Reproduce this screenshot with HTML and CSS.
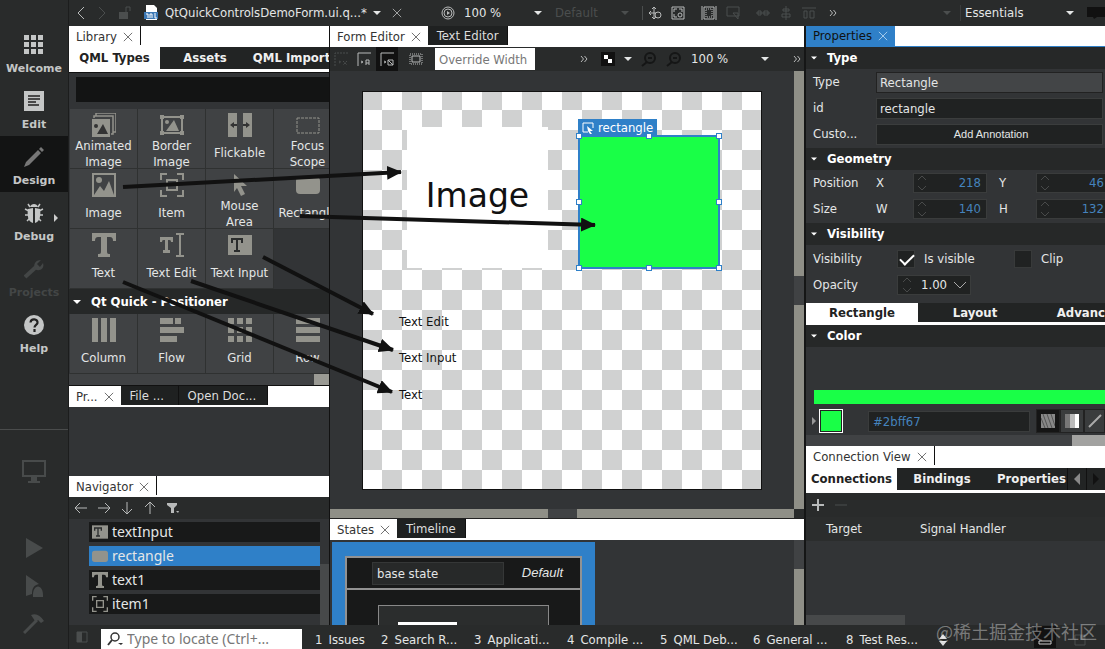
FILE: index.html
```html
<!DOCTYPE html>
<html lang="en">
<head>
<meta charset="UTF-8" />
<meta name="viewport" content="width=device-width, initial-scale=1" />
<title>QtQuickControlsDemoForm.ui.qml - Qt Creator</title>
<link rel="stylesheet" href="styles.css">
</head>
<body>
<!-- shared icons -->
<svg class="defs" aria-hidden="true">
  <symbol id="close" viewBox="0 0 12 12"><path d="M1 1l10 10M11 1L1 11" fill="none" stroke="currentColor"/></symbol>
  <symbol id="down" viewBox="0 0 8 4"><path d="M0 0h8L4 4z" fill="currentColor"/></symbol>
  <symbol id="more" viewBox="0 0 8 8"><path d="M1 1l2.500 3L1 7M4.500 1L7 4 4.500 7" fill="none" stroke="currentColor"/></symbol>
  <symbol id="spin" viewBox="0 0 10 18"><path d="M1 6l4-4 4 4M1 12l4 4 4-4" fill="none" stroke="currentColor"/></symbol>
  <symbol id="zoomer" viewBox="0 0 16 16"><circle cx="9" cy="7" r="5" fill="none" stroke="currentColor" stroke-width="2"/><path d="M6 11l-5 4M7 7h4" stroke="currentColor" stroke-width="2"/></symbol>
  <symbol id="item" viewBox="0 0 24 24"><path d="M1 7V1h6M17 1h6v6M23 17v6h-6M7 23H1v-6" fill="none" stroke="currentColor" stroke-width="2"/><path d="M7 7h10v10H7z" fill="none" stroke="currentColor" stroke-width="2"/></symbol>
  <symbol id="text" viewBox="0 0 24 24"><path d="M0 0h24v8h-3c0-3-1-4-3-4h-3v14c0 3 1 3 3 3v3H6v-3c2 0 3 0 3-3V4H6C4 4 3 5 3 8H0z" fill="currentColor"/></symbol>
  <symbol id="textinput" viewBox="0 0 24 24"><path d="M0 2h24v20H0z" fill="currentColor"/><path d="M3 5h12v5h-2V7h-3v10h2v2H6v-2h2V7H5v3H3z" fill="#2b2d2d"/></symbol>
  <symbol id="rect" viewBox="0 0 24 24"><rect y="4" width="24" height="17" rx="4" fill="currentColor"/></symbol>
</svg>

<div class="app">
  <nav class="modes" aria-label="Modes">
    <button class="mode"><svg width="20" height="20" viewBox="0 0 20 20"><path fill="currentColor" d="M0 0h5v5H0zM7 0h5v5H7zM14 0h5v5h-5zM0 7h5v5H0zM7 7h5v5H7zM14 7h5v5h-5zM0 14h5v5H0zM7 14h5v5H7zM14 14h5v5h-5z"/></svg>Welcome</button>
    <button class="mode"><svg width="20" height="20" viewBox="0 0 20 20"><path fill="currentColor" d="M0 0h20v20H0z"/><path d="M4 5h12M4 8h12M4 11h8M4 14h11" stroke="#222" stroke-width="1.500"/></svg>Edit</button>
    <button class="mode active"><svg width="20" height="20" viewBox="0 0 20 20"><path fill="#777" d="M0 20l2-5L14 3l3 3L5 18zM15 2l2-2 3 3-2 2z"/></svg>Design</button>
    <button class="mode"><svg width="20" height="20" viewBox="0 0 20 20"><path d="M6 4l-2-3M14 4l2-3M5 8L1 6M5 12H1M6 15l-3 3M15 8l4-2M15 12h4M14 15l3 3" stroke="currentColor" stroke-width="1.500"/><path fill="currentColor" d="M6 4c1-4 7-4 8 0zM9 5v15C4 19 3 12 4 6zM11 5v15c5-1 6-8 5-14z"/></svg>Debug<span class="mode-menu"></span></button>
    <button class="mode disabled" disabled><svg width="20" height="20" viewBox="0 0 20 20"><path d="M1 18L12 8" stroke="currentColor" stroke-width="4"/><path d="M17 1l-4 4 3 3 3-4c2 6-4 9-8 6-2-4 0-9 6-9z" fill="currentColor"/></svg>Projects</button>
    <button class="mode"><svg width="20" height="20" viewBox="0 0 20 20"><circle cx="10" cy="10" r="10" fill="currentColor"/><path d="M6.500 7.500C7 3 14 3.500 13.500 8c-.5 2-3 2-3 4.500M10.500 14v3" fill="none" stroke="#222" stroke-width="2.200"/></svg>Help</button>
    <div class="kits">
      <svg class="kit" width="24" height="24" viewBox="0 0 24 24"><path d="M1 1h22v15H1z" fill="none" stroke="currentColor" stroke-width="2"/><path d="M9 17h6v4h3v2H6v-2h3z" fill="currentColor"/></svg>
      <svg width="20" height="20" viewBox="0 0 20 20"><path d="M2 0l17 10L2 20z" fill="currentColor"/></svg>
      <svg width="20" height="22" viewBox="0 0 20 22"><path d="M2 0l13 9c-5 1-7 4-7 10l-6 2zM9 22c-1-14 11-14 10 0z" fill="currentColor"/></svg>
      <svg width="22" height="20" viewBox="0 0 22 20"><path d="M1 19L14 6" stroke="currentColor" stroke-width="3"/><path d="M8 1c5-2 9 0 13 6l-3 2-3-3-3 1z" fill="currentColor"/></svg>
    </div>
  </nav>

  <div class="main">
    <header class="topbar">
      <button class="icon-btn" aria-label="Back"><svg width="8" height="14" viewBox="0 0 8 14"><path d="M7 1L1 7l6 6" fill="none" stroke="currentColor"/></svg></button>
      <button class="icon-btn dim" aria-label="Forward"><svg width="8" height="14" viewBox="0 0 8 14"><path d="M1 1l6 6-6 6" fill="none" stroke="currentColor"/></svg></button>
      <svg class="dim" width="12" height="14" viewBox="0 0 12 14"><path d="M0 6h9v7H0z" fill="currentColor"/><path d="M7 6V1h4v4" fill="none" stroke="currentColor"/></svg>
      <svg width="14" height="16" viewBox="0 0 14 16"><path d="M2 0h8l3 3v12H2z" fill="#fff"/><path d="M0 7h14v7H0z" fill="#3c78b4"/><path d="M2 9h2v4M6 13V9h2v4M11 8v5h2" fill="none" stroke="#fff"/></svg>
      <span class="pick file"><select aria-label="Open document"><option>QtQuickControlsDemoForm.ui.q...*</option></select><svg width="8" height="4"><use href="#down"/></svg></span>
      <button class="icon-btn split" aria-label="Close document"><svg width="10" height="10"><use href="#close"/></svg></button>
      <button class="icon-btn live" aria-label="Live preview"><svg width="14" height="14" viewBox="0 0 14 14"><circle cx="7" cy="7" r="6" fill="none" stroke="currentColor"/><circle cx="7" cy="7" r="4" fill="none" stroke="currentColor"/><path d="M6 5l3 2-3 2z" fill="currentColor"/></svg></button>
      <span class="pick preview"><select aria-label="Preview zoom"><option>100 %</option></select><svg width="8" height="4"><use href="#down"/></svg></span>
      <span class="pick style dim"><select aria-label="Style" disabled><option>Default</option></select><svg width="8" height="4"><use href="#down"/></svg></span>
      <div class="tools">
        <svg width="14" height="14" viewBox="0 0 14 14"><path d="M6 1v12M1 7h9M4 3l2-2 2 2M3 5L1 7l2 2M4 11l2 2 2-2" fill="none" stroke="currentColor"/><circle cx="10" cy="9" r="3" fill="#2b2d2d" stroke="currentColor"/></svg>
        <svg width="14" height="14" viewBox="0 0 14 14"><path d="M1 1h12v12H1zM3 6V3h3M8 3h3v3M3 8v3h3" fill="none" stroke="currentColor"/><circle cx="9" cy="9" r="2" fill="none" stroke="currentColor"/></svg>
        <svg class="gap" width="16" height="14" viewBox="0 0 16 14"><path d="M1 0v14M15 0v14" stroke="currentColor"/><path d="M3 1h10v12H3z" fill="none" stroke="currentColor"/><path d="M5 3h6v8H5z" fill="none" stroke="currentColor" stroke-dasharray="1 1"/></svg>
        <svg class="dim" width="14" height="14" viewBox="0 0 14 14"><path d="M1 1h12v9H1zM7 7h5v6z" fill="none" stroke="currentColor"/></svg>
        <svg class="dim gap" width="14" height="14" viewBox="0 0 14 14"><path d="M0 7h14M2 5h3v4H2zM8 5h4v4H8z" fill="none" stroke="currentColor"/></svg>
        <svg class="dim" width="14" height="14" viewBox="0 0 14 14"><path d="M7 0v14M4 3h6v2H4zM3 8h8v3H3z" fill="none" stroke="currentColor"/></svg>
        <svg class="dim" width="14" height="14" viewBox="0 0 14 14"><path d="M0 2h14M2 5h3v7H2zM8 5h4v7H8z" fill="none" stroke="currentColor"/></svg>
      </div>
      <button class="icon-btn overflow" aria-label="More tools"><svg width="8" height="8"><use href="#more"/></svg></button>
      <svg class="dim" width="8" height="4"><use href="#down"/></svg>
      <span class="pick workspace"><select aria-label="Workspace"><option>Essentials</option></select><svg width="8" height="4"><use href="#down"/></svg></span>
      <svg width="18" height="14" viewBox="0 0 18 14"><path d="M0 1h18v10h-8l-3 2-1-2H0z" fill="#111"/></svg>
    </header>

    <div class="workspace-area">
      <aside class="left">
        <div class="dock-tabs"><button class="tab on">Library <svg width="10" height="10"><use href="#close"/></svg></button><span class="tab-end"></span></div>
        <div class="sub-tabs library-tabs"><button class="on">QML Types</button><button>Assets</button><button>QML Imports</button></div>
        <div class="search"><input type="text" aria-label="Search library"></div>
        <div class="types">
          <button><svg width="24" height="24" viewBox="0 0 24 24"><path d="M4 3V0h20v19h-3M2 5V3h19v18h-2" fill="none" stroke="currentColor" stroke-width="1.500"/><path d="M0 6h18v18H0z" fill="currentColor"/><circle cx="4" cy="13" r="2" fill="#333"/><path d="M5 21l6-10 5 10z" fill="#333"/></svg><span>Animated<br>Image</span></button>
          <button><svg width="24" height="24" viewBox="0 0 24 24"><path d="M2 4h20v16H2z" fill="none" stroke="currentColor" stroke-width="2"/><path d="M0 2h4v4H0zM20 2h4v4h-4zM0 18h4v4H0zM20 18h4v4h-4z" fill="currentColor"/><circle cx="7" cy="9" r="2" fill="currentColor"/><path d="M6 18l8-11 5 11z" fill="currentColor"/></svg><span>Border<br>Image</span></button>
          <button><svg width="24" height="24" viewBox="0 0 24 24"><path d="M0 0h9v24H0zM15 0h9v24h-9z" fill="currentColor"/><path d="M2 12l4-3v2h3v2H6v2zM22 12l-4-3v2h-3v2h3v2z" fill="#333"/></svg><span>Flickable</span></button>
          <button><svg width="24" height="24" viewBox="0 0 24 24"><path d="M1 5h22v15H1z" fill="none" stroke="currentColor" stroke-dasharray="3 1"/></svg><span>Focus<br>Scope</span></button>
          <button><svg width="24" height="24" viewBox="0 0 24 24"><path d="M1 1h22v22H1z" fill="none" stroke="currentColor" stroke-width="2"/><circle cx="7" cy="7" r="3" fill="currentColor"/><path d="M2 22l6-9 4 5 5-10 5 14z" fill="currentColor"/></svg><span>Image</span></button>
          <button><svg width="24" height="24"><use href="#item"/></svg><span>Item</span></button>
          <button><svg width="24" height="24" viewBox="0 0 24 24"><path d="M6 1l13 12h-6l4 8-4 2-4-8-3 4z" fill="currentColor"/></svg><span>Mouse<br>Area</span></button>
          <button><svg width="24" height="24"><use href="#rect"/></svg><span>Rectangle</span></button>
          <button><svg width="24" height="24"><use href="#text"/></svg><span>Text</span></button>
          <button><svg width="24" height="24" viewBox="0 0 24 24"><path d="M0 4h13v5h-2c0-2-1-2-3-2v10h2v3H3v-3h2V7C3 7 2 7 2 9H0z" fill="currentColor"/><path d="M16 1h8M20 1v22M16 23h8" stroke="currentColor" stroke-width="2"/></svg><span>Text Edit</span></button>
          <button><svg width="24" height="24"><use href="#textinput"/></svg><span>Text Input</span></button>
        </div>
        <h3 class="group"><svg width="8" height="4"><use href="#down"/></svg>Qt Quick - Positioner</h3>
        <div class="types">
          <button><svg width="24" height="24" viewBox="0 0 24 24"><path d="M0 0h6v24H0zM9 0h6v24H9zM18 0h6v24h-6z" fill="currentColor"/></svg><span>Column</span></button>
          <button><svg width="24" height="24" viewBox="0 0 24 24"><path d="M0 0h13v6H0zM15 0h6v6h-6zM0 9h24v6H0zM0 18h17v6H0z" fill="currentColor"/></svg><span>Flow</span></button>
          <button><svg width="24" height="24" viewBox="0 0 24 24"><path d="M0 0h6v6H0zM9 0h6v6H9zM18 0h6v6h-6zM0 9h6v6H0zM9 9h6v6H9zM18 9h6v6h-6zM0 18h6v6H0zM9 18h6v6H9zM18 18h6v6h-6z" fill="currentColor"/></svg><span>Grid</span></button>
          <button><svg width="24" height="24" viewBox="0 0 24 24"><path d="M0 0h24v6H0zM0 9h24v6H0zM0 18h24v6H0z" fill="currentColor"/></svg><span>Row</span></button>
        </div>
        <div class="library-foot"><span></span></div>
        <div class="dock-tabs"><button class="tab on">Pr... <svg width="10" height="10"><use href="#close"/></svg></button><button class="tab off">File ...</button><button class="tab off wide">Open Doc...</button></div>
        <div class="empty-dock"></div>
        <div class="dock-tabs"><button class="tab on">Navigator <svg width="10" height="10"><use href="#close"/></svg></button><span class="tab-end"></span></div>
        <div class="nav-tools">
          <button class="icon-btn" aria-label="Left"><svg width="12" height="12" viewBox="0 0 12 12"><path d="M12 6H1M5 1L0 6l5 5" fill="none" stroke="currentColor"/></svg></button>
          <button class="icon-btn" aria-label="Right"><svg width="12" height="12" viewBox="0 0 12 12"><path d="M0 6h11M7 1l5 5-5 5" fill="none" stroke="currentColor"/></svg></button>
          <button class="icon-btn" aria-label="Down"><svg width="12" height="12" viewBox="0 0 12 12"><path d="M6 0v11M1 7l5 5 5-5" fill="none" stroke="currentColor"/></svg></button>
          <button class="icon-btn" aria-label="Up"><svg width="12" height="12" viewBox="0 0 12 12"><path d="M6 12V1M1 5l5-5 5 5" fill="none" stroke="currentColor"/></svg></button>
          <button class="icon-btn" aria-label="Filter"><svg width="12" height="12" viewBox="0 0 12 12"><path d="M0 1h10v2L7 6v5H4V6L0 3zM9 9h3l-1 2z" fill="currentColor"/></svg></button>
        </div>
        <div class="tree">
          <ul>
            <li><svg width="16" height="16"><use href="#textinput"/></svg>textInput</li>
            <li class="selected"><svg width="16" height="16"><use href="#rect"/></svg>rectangle</li>
            <li><svg width="16" height="16"><use href="#text"/></svg>text1</li>
            <li><svg width="16" height="16"><use href="#item"/></svg>item1</li>
          </ul>
          <div class="tree-scroll"></div>
        </div>
      </aside>

      <main class="center">
        <div class="dock-tabs"><button class="tab on">Form Editor <svg width="10" height="10"><use href="#close"/></svg></button><button class="tab off">Text Editor</button></div>
        <div class="form-tools">
          <button class="icon-btn dim" aria-label="No snapping"><svg width="14" height="14" viewBox="0 0 14 14"><path d="M1 14V1h13M5 9l2 1-2 1M9 9l4 4M13 9l-4 4" fill="none" stroke="currentColor" stroke-dasharray="2 1"/></svg></button>
          <button class="icon-btn" aria-label="Snap to anchors"><svg width="14" height="14" viewBox="0 0 14 14"><path d="M1 14V1h13M4 9l2 1-2 1M9 13V8h3v5M9 11h3" fill="none" stroke="currentColor"/></svg></button>
          <button class="icon-btn pressed" aria-label="Snap to parent"><svg width="14" height="14" viewBox="0 0 14 14"><path d="M1 14V1h13M4 9l2 1-2 1M8 8h5v5H8zM8 8l5 5" fill="none" stroke="currentColor"/></svg></button>
          <button class="icon-btn bounds" aria-label="Show bounding rectangles"><svg width="14" height="12" viewBox="0 0 14 12"><path d="M1 1h12v10H1z" fill="none" stroke="currentColor" stroke-dasharray="1 1"/><path d="M3 3h8v6H3z" fill="none" stroke="currentColor"/></svg></button>
          <input class="override" type="text" placeholder="Override Width" aria-label="Override Width">
          <button class="icon-btn push" aria-label="More size options"><svg width="8" height="8"><use href="#more"/></svg></button>
          <button class="icon-btn canvas-color" aria-label="Canvas colour"><svg width="14" height="14" viewBox="0 0 14 14"><path d="M0 0h14v14H0z" fill="#111"/><path d="M3 3h4v4H3zM7 7h4v4H7z" fill="#fff"/></svg></button>
          <svg width="8" height="4"><use href="#down"/></svg>
          <button class="icon-btn dark" aria-label="Zoom in"><svg width="16" height="16"><use href="#zoomer"/></svg></button>
          <button class="icon-btn dark" aria-label="Zoom out"><svg width="16" height="16"><use href="#zoomer"/></svg></button>
          <span class="pick canvas-zoom"><select aria-label="Canvas zoom"><option>100 %</option></select><svg width="8" height="4"><use href="#down"/></svg></span>
          <button class="icon-btn last" aria-label="More"><svg width="8" height="8"><use href="#more"/></svg></button>
        </div>
        <div class="form-view">
          <div class="form-canvas">
            <div class="artboard">
              <div class="node image-node">Image</div>
              <div class="node rect-node">
                <span class="node-label"><svg width="12" height="12" viewBox="0 0 12 12"><path d="M11 6V1H1v9h5" fill="none" stroke="#fff"/><path d="M5 4l6 5H8l2 3H8L6 9z" fill="#fff"/></svg>rectangle</span>
                <i class="h nw"></i><i class="h n"></i><i class="h ne"></i><i class="h w"></i><i class="h e"></i><i class="h sw"></i><i class="h s"></i><i class="h se"></i>
              </div>
              <span class="node edit-node">Text Edit</span>
              <span class="node input-node">Text Input</span>
              <span class="node text-node">Text</span>
            </div>
          </div>
          <div class="vscroll"><span></span><b></b><span></span></div>
        </div>
        <div class="hscroll"><span></span><b></b><span></span></div>
        <div class="dock-tabs"><button class="tab on">States <svg width="10" height="10"><use href="#close"/></svg></button><button class="tab off">Timeline</button></div>
        <div class="states">
          <div class="state">
            <div class="state-card">
              <div class="state-head"><input type="text" value="base state" aria-label="State name"><em>Default</em></div>
              <div class="state-body"><div class="thumb"><span></span></div></div>
            </div>
          </div>
          <div class="vscroll"><b></b><span></span></div>
        </div>
      </main>

      <aside class="right">
        <div class="dock-tabs focus"><button class="tab active">Properties <svg width="10" height="10"><use href="#close"/></svg></button></div>
        <h3 class="section"><svg width="6" height="4"><use href="#down"/></svg>Type</h3>
        <div class="rows">
          <div class="row"><label for="ptype">Type</label><input id="ptype" class="field raised" type="text" value="Rectangle" readonly></div>
          <div class="row"><label for="pid">id</label><input id="pid" class="field" type="text" value="rectangle"></div>
          <div class="row"><span class="label">Custo...</span><button class="field annotate">Add Annotation</button></div>
        </div>
        <h3 class="section"><svg width="6" height="4"><use href="#down"/></svg>Geometry</h3>
        <div class="rows">
          <div class="row"><span class="label">Position</span><label class="axis" for="gx">X</label><span class="spin"><svg width="10" height="18"><use href="#spin"/></svg><input id="gx" type="text" value="218"></span><label class="axis" for="gy">Y</label><span class="spin"><svg width="10" height="18"><use href="#spin"/></svg><input id="gy" type="text" value="46"></span></div>
          <div class="row"><span class="label">Size</span><label class="axis" for="gw">W</label><span class="spin"><svg width="10" height="18"><use href="#spin"/></svg><input id="gw" type="text" value="140"></span><label class="axis" for="gh">H</label><span class="spin"><svg width="10" height="18"><use href="#spin"/></svg><input id="gh" type="text" value="132"></span></div>
        </div>
        <h3 class="section"><svg width="6" height="4"><use href="#down"/></svg>Visibility</h3>
        <div class="rows tall">
          <div class="row"><span class="label vis">Visibility</span><label class="check"><input type="checkbox" checked>Is visible</label><label class="check"><input type="checkbox">Clip</label></div>
          <div class="row"><label class="vis" for="op">Opacity</label><span class="opacity"><svg width="10" height="18"><use href="#spin"/></svg><input id="op" type="text" value="1.00"><svg class="chev" width="12" height="8" viewBox="0 0 12 8"><path d="M0 1l6 6 6-6" fill="none" stroke="currentColor"/></svg></span></div>
        </div>
        <div class="sub-tabs prop-tabs"><button class="on">Rectangle</button><button>Layout</button><button>Advanced</button></div>
        <h3 class="section"><svg width="6" height="4"><use href="#down"/></svg>Color</h3>
        <div class="color-bar"></div>
        <div class="color-row">
          <span class="expand"></span><span class="swatch"></span>
          <input type="text" value="#2bff67" aria-label="Color value">
          <button class="fill on" aria-label="Solid"><svg width="14" height="14" viewBox="0 0 14 14"><path d="M0 0h14v14H0z" fill="#888"/><path d="M2 0l5 14M6 0l5 14M10 0l4 12M0 4l4 10" stroke="#555"/></svg></button>
          <button class="fill" aria-label="Gradient"><svg width="14" height="14" viewBox="0 0 14 14"><path d="M0 0h5v14H0z" fill="#777"/><path d="M5 0h5v14H5z" fill="#bbb"/><path d="M10 0h4v14h-4z" fill="#fff"/></svg></button>
          <button class="fill" aria-label="Transparent"><svg width="14" height="14" viewBox="0 0 14 14"><path d="M1 13L13 1" stroke="#aaa" stroke-width="2"/></svg></button>
        </div>
        <div class="prop-scroll"><span></span></div>
        <div class="dock-tabs"><button class="tab on">Connection View <svg width="10" height="10"><use href="#close"/></svg></button><span class="tab-end"></span></div>
        <div class="sub-tabs conn-tabs"><button class="on">Connections</button><button>Bindings</button><button>Properties</button><button class="arrow" aria-label="Previous tab"><svg width="6" height="12" viewBox="0 0 6 12"><path d="M6 0v12L0 6z" fill="#888"/></svg></button><button class="arrow" aria-label="Next tab"><svg width="6" height="12" viewBox="0 0 6 12"><path d="M0 0v12l6-6z" fill="#111"/></svg></button></div>
        <div class="conn-tools">
          <button class="icon-btn" aria-label="Add"><svg width="12" height="12" viewBox="0 0 12 12"><path d="M6 0v12M0 6h12" stroke="currentColor" stroke-width="2"/></svg></button>
          <button class="icon-btn dim" aria-label="Remove"><svg width="12" height="12" viewBox="0 0 12 12"><path d="M0 6h12" stroke="currentColor"/></svg></button>
        </div>
        <table class="conn"><thead><tr><th>Target</th><th>Signal Handler</th><th></th></tr></thead></table>
        <div class="conn-body"><div class="conn-scroll"></div></div>
      </aside>
    </div>

    <footer class="bottombar">
      <svg class="dim" width="12" height="12" viewBox="0 0 12 12"><path d="M1 1h10v10H1z" fill="none" stroke="currentColor"/><path d="M1 1h5v10H1z" fill="currentColor"/></svg>
      <label class="locator"><svg width="16" height="14" viewBox="0 0 16 14"><circle cx="8" cy="5" r="4" fill="none" stroke="#333" stroke-width="1.500"/><path d="M5 8l-4 5" stroke="#333" stroke-width="2"/><path d="M11 11h5l-2 2z" fill="#333"/></svg><input type="text" placeholder="Type to locate (Ctrl+..." aria-label="Locate"></label>
      <div class="panes">
        <button class="short"><b>1</b>Issues</button><button><b>2</b>Search R...</button><button><b>3</b>Applicati...</button><button><b>4</b>Compile ...</button><button><b>5</b>QML Deb...</button><button><b>6</b>General ...</button><button><b>8</b>Test Res...</button>
      </div>
      <svg class="pane-more" width="8" height="12" viewBox="0 0 8 12"><path d="M0 5l4-5 4 5zM0 7h8l-4 5z" fill="#ddd"/></svg>
      <button class="progress" aria-label="Progress"><svg width="14" height="8" viewBox="0 0 14 8"><path d="M1 3h12v3H1z" fill="none" stroke="#ccc"/></svg></button>
      <svg class="dim" width="12" height="12" viewBox="0 0 12 12"><path d="M1 1h10v10H1z" fill="none" stroke="currentColor"/><path d="M6 1h5v5H6z" fill="currentColor"/></svg>
    </footer>
  </div>
</div>

<!-- arrows from library types to their nodes on the form -->
<svg class="arrows" width="1105" height="649" viewBox="0 0 1105 649" aria-hidden="true">
  <defs><marker id="head" viewBox="0 0 15 14" refX="14" refY="7" markerWidth="15" markerHeight="14" markerUnits="userSpaceOnUse" orient="auto"><path d="M0 0l15 7-15 7z" fill="#111"/></marker></defs>
  <g stroke="#111" stroke-width="4">
    <path d="M123 187L401 172" marker-end="url(#head)"/>
    <path d="M300 216L595 225" marker-end="url(#head)"/>
    <path d="M263 257L373 314" marker-end="url(#head)"/>
    <path d="M191 281L393 350" marker-end="url(#head)"/>
    <path d="M123 282L392 392" marker-end="url(#head)"/>
  </g>
</svg>
<div class="watermark">@稀土掘金技术社区</div>
</body>
</html>
```
FILE: styles.css
```css
:root {
  --bar: #292b2b;
  --panel: #323436;
  --cell: #404244;
  --dark: #202222;
  --black: #131414;
  --blue: #2f80c8;
  --icon: #93938c;
  --text: #e4e6e6;
  --green: #19ff47;
}
* {
  box-sizing: border-box;
}
body {
  margin: 0;
  font-family: "DejaVu Sans Condensed", "Noto Sans", sans-serif;
  font-size: 13px;
  line-height: 16px;
  color: var(--text);
  background: var(--bar);
  overflow: hidden;
}
button, input, select {
  font: inherit;
  color: inherit;
  border: 0;
  border-radius: 0;
  margin: 0;
  padding: 0;
  background: none;
  outline: none;
}
svg {
  display: block;
  flex-shrink: 0;
}
.defs {
  position: absolute;
  width: 0;
  height: 0;
}
.dim {
  color: #4b4e4e;
}
.app {
  display: flex;
  height: 100vh;
}

/* mode selector */
.modes {
  width: 69px;
  flex-shrink: 0;
  display: flex;
  flex-direction: column;
  padding-top: 24px;
  border-right: 1px solid #1c1d1d;
}
.mode {
  position: relative;
  height: 56px;
  display: flex;
  flex-direction: column;
  align-items: center;
  padding-top: 11px;
  gap: 6px;
  font: bold 11px/16px "DejaVu Sans", sans-serif;
  color: #c4c6c6;
}
.mode.active {
  background: var(--black);
}
.mode.disabled {
  color: #434646;
}
.mode-menu {
  position: absolute;
  right: 10px;
  top: 22px;
  border: 4px solid transparent;
  border-left-color: #ccc;
  border-right: 0;
}
.kits {
  margin-top: 69px;
  padding-top: 30px;
  border-top: 1px solid #4a4c4c;
  display: flex;
  flex-direction: column;
  align-items: center;
  gap: 17px;
  color: #484b4b;
}
.kit {
  margin-bottom: 37px;
}

.main {
  flex: 1;
  min-width: 0;
  display: flex;
  flex-direction: column;
}

/* top toolbar */
.topbar {
  height: 26px;
  flex-shrink: 0;
  display: flex;
  align-items: center;
  padding-left: 8px;
  gap: 13px;
}
.icon-btn {
  display: flex;
  align-items: center;
  justify-content: center;
  color: #b8baba;
}
.icon-btn.dim {
  color: #4b4e4e;
}
.pick {
  display: flex;
  align-items: center;
  justify-content: space-between;
}
.pick select {
  appearance: none;
  flex: 1;
  min-width: 0;
  opacity: 1;
}
.file {
  width: 216px;
  margin-left: -6px;
}
.split {
  margin-left: -2px;
}
.live {
  margin-left: 26px;
}
.preview {
  width: 78px;
  margin-left: -4px;
}
.style {
  width: 74px;
}
.tools {
  display: flex;
  gap: 9px;
  padding-left: 5px;
  border-left: 1px solid #4b4e4e;
  color: #b8baba;
}
.tools .dim {
  color: #4b4e4e;
}
.tools .gap {
  margin-left: 7px;
}
.overflow {
  margin-right: auto;
}
.workspace {
  width: 114px;
  margin-left: -4px;
  padding-left: 4px;
  border-left: 1px solid #3b3d3d;
}

.workspace-area {
  flex: 1;
  min-height: 0;
  display: flex;
}

/* docks */
.dock-tabs {
  height: 21px;
  flex-shrink: 0;
  display: flex;
  background: #fff;
}
.tab {
  display: flex;
  align-items: center;
  gap: 6px;
  padding: 0 7px;
  color: #333;
  white-space: nowrap;
}
.tab svg {
  color: #555;
}
.tab.off {
  height: 19px;
  padding: 0 9px;
  background: #1f2121;
  border-right: 1px solid #111;
  color: #ddd;
}
.tab.active {
  background: var(--blue);
  color: #111;
}
.tab.active svg {
  color: #b9d8f2;
}
.tab-end {
  width: 1px;
  height: 19px;
  background: #111;
}
.focus {
  border-bottom: 1px solid var(--blue);
}
.sub-tabs {
  display: flex;
  flex-shrink: 0;
  overflow: hidden;
  border-bottom: 3px solid #fff;
}
.sub-tabs button {
  height: 22px;
  flex-shrink: 0;
  background: #222424;
  font-weight: bold;
  color: #f0f0f0;
  white-space: nowrap;
}
.sub-tabs .on {
  background: #fff;
  color: #222;
}

.left {
  width: 261px;
  flex-shrink: 0;
  display: flex;
  flex-direction: column;
  border-right: 1px solid #111;
  overflow: hidden;
}
.library-tabs button {
  width: 90px;
}
.library-tabs .on {
  width: 91px;
}
.search {
  padding: 4px 0 7px 7px;
  background: var(--panel);
  border-top: 1px solid #111;
}
.search input {
  display: block;
  width: 100%;
  height: 25px;
  background: var(--black);
}
.types {
  display: grid;
  grid-template-columns: repeat(4, 68px);
  grid-auto-rows: 60px;
  background: var(--panel);
  padding-left: 1px;
}
.types button {
  display: flex;
  flex-direction: column;
  align-items: center;
  padding-top: 4px;
  background: var(--cell);
  border-right: 1px solid #2f3131;
  border-bottom: 1px solid #2f3131;
}
.types svg {
  color: var(--icon);
}
.types span {
  height: 32px;
  margin-top: 1px;
  display: flex;
  flex-direction: column;
  align-items: center;
  justify-content: center;
}
.types span:has(br) {
  display: block;
}
.group, .section {
  margin: 0;
  display: flex;
  align-items: center;
  font-size: 13px;
  font-weight: bold;
  color: #fff;
  background: #262828;
}
.group {
  height: 25px;
  flex-shrink: 0;
  padding-left: 4px;
  gap: 10px;
}
.library-foot {
  height: 12px;
  display: flex;
  justify-content: flex-end;
  background: var(--cell);
  border-bottom: 1px solid #111;
}
.library-foot span {
  width: 15px;
  background: #9a9a94;
}
.left .off {
  width: 58px;
}
.left .wide {
  width: 89px;
}
.empty-dock {
  height: 69px;
  background: var(--panel);
}
.nav-tools {
  height: 22px;
  display: flex;
  align-items: center;
  gap: 11px;
  padding-left: 6px;
}
.tree {
  flex: 1;
  display: flex;
  background: var(--panel);
}
.tree ul {
  flex: 1;
  margin: 0;
  padding: 3px 0 0 20px;
  list-style: none;
  font: 14px/16px "Noto Sans", sans-serif;
}
.tree li {
  height: 20px;
  display: flex;
  align-items: center;
  gap: 4px;
  margin-bottom: 4px;
  padding-left: 3px;
  background: #181919;
}
.tree li svg {
  color: var(--icon);
}
.tree .selected {
  background: var(--blue);
}
.tree-scroll {
  width: 9px;
  margin-top: 45px;
  background: #47494a;
}

/* form editor */
.center {
  flex: 1;
  min-width: 0;
  display: flex;
  flex-direction: column;
  border-right: 2px solid #151616;
}
.form-tools {
  height: 24px;
  flex-shrink: 0;
  display: flex;
  align-items: center;
  gap: 9px;
  padding-left: 4px;
}
.form-tools .pressed {
  height: 24px;
  padding: 0 4px;
  margin: 0 -4px;
  background: #111;
}
.bounds {
  margin-left: 6px;
}
.override {
  width: 100px;
  height: 22px;
  margin-left: 3px;
  padding-left: 4px;
  background: #fff;
  color: #333;
}
.override::placeholder, .locator input::placeholder {
  color: #777;
  opacity: 1;
}
.push {
  margin-left: auto;
}
.canvas-color {
  margin-left: 4px;
}
.form-tools .dark {
  color: #151616;
}
.canvas-zoom {
  width: 78px;
}
.last {
  margin: 0 3px 0 15px;
}
.form-view {
  flex: 1;
  min-height: 0;
  display: flex;
}
.form-canvas {
  flex: 1;
  background: var(--panel);
  padding: 20px 0 0 32px;
}
.artboard {
  position: relative;
  width: 400px;
  height: 399px;
  border: 1px solid #111;
  background: conic-gradient(#fff 25%, #d0d1d1 0 50%, #fff 0 75%, #d0d1d1 0) -1px -2px / 40px 40px;
  color: #111;
}
.node {
  position: absolute;
}
.image-node {
  left: 44px;
  top: 35px;
  width: 141px;
  height: 141px;
  padding-bottom: 4px;
  display: flex;
  align-items: center;
  justify-content: center;
  background: #fff;
  font: 33px/40px "DejaVu Sans", sans-serif;
}
.rect-node {
  left: 215px;
  top: 43px;
  width: 142px;
  height: 134px;
  background: var(--green);
  border: 2px solid var(--blue);
}
.node-label {
  position: absolute;
  left: -2px;
  bottom: 100%;
  height: 18px;
  display: flex;
  align-items: center;
  gap: 4px;
  padding: 0 4px;
  background: var(--blue);
  color: #fff;
}
.h {
  position: absolute;
  width: 6px;
  height: 6px;
  background: #fff;
  border: 1px solid var(--blue);
}
.nw, .n, .ne { top: -4px; }
.sw, .s, .se { bottom: -4px; }
.w, .e { top: 62px; }
.nw, .w, .sw { left: -4px; }
.ne, .e, .se { right: -4px; }
.n, .s { left: 66px; }
.edit-node, .input-node, .text-node {
  left: 36px;
}
.edit-node { top: 222px; }
.input-node { top: 258px; }
.text-node { top: 295px; }
.vscroll {
  width: 10px;
  display: flex;
  flex-direction: column;
}
.vscroll span, .hscroll span {
  flex: 1;
  background: #8f8f87;
}
.vscroll b, .hscroll b {
  flex: 0 0 29px;
  background: #404244;
}
.hscroll {
  height: 10px;
  flex-shrink: 0;
  display: flex;
  padding-right: 10px;
  border-bottom: 1px solid #222;
}

/* states */
.states {
  height: 85px;
  flex-shrink: 0;
  display: flex;
  justify-content: space-between;
  overflow: hidden;
  padding-left: 2px;
  background: var(--panel);
}
.state {
  width: 263px;
  margin-top: 2px;
  padding: 14px 13px 0;
  background: var(--blue);
}
.state-card {
  height: 100%;
  border: 2px solid #929292;
  border-bottom: 0;
  background: #181919;
}
.state-head {
  height: 32px;
  display: flex;
  align-items: center;
  justify-content: space-between;
  padding: 0 17px 0 25px;
  border-bottom: 2px solid #929292;
}
.state-head input {
  width: 132px;
  height: 23px;
  padding-left: 4px;
  background: #272929;
  border: 1px solid #353737;
}
.state-head em {
  font-family: "Liberation Sans", sans-serif;
}
.state-body {
  padding: 15px 31px 0;
}
.thumb {
  height: 30px;
  border: 1px solid #888;
  background: #2b2d2d;
  padding: 16px 19px;
}
.thumb span {
  display: block;
  width: 59px;
  height: 3px;
  background: #fff;
}

/* properties */
.right {
  width: 299px;
  flex-shrink: 0;
  display: flex;
  flex-direction: column;
  overflow: hidden;
  background: var(--panel);
}
.section {
  height: 22px;
  flex-shrink: 0;
  padding-left: 5px;
  gap: 10px;
}
.rows {
  padding-bottom: 1px;
}
.rows.tall {
  padding: 1px 0 5px;
}
.row {
  height: 26px;
  display: flex;
  align-items: center;
  padding-left: 7px;
  white-space: nowrap;
}
.row > label:first-child, .label {
  width: 63px;
  flex-shrink: 0;
}
.field {
  flex: 1;
  height: 21px;
  margin-right: 2px;
  padding-left: 3px;
  background: var(--dark);
  border: 1px solid #3b3d3d;
}
.raised {
  background: #434547;
  border-color: #222;
}
.annotate {
  font-size: 11px;
  font-family: "Liberation Sans", sans-serif;
}
.axis {
  width: 37px;
  flex-shrink: 0;
}
.spin, .opacity {
  display: flex;
  flex-shrink: 0;
  align-items: center;
  height: 20px;
  margin-right: 12px;
  border: 1px solid #3a3c3c;
  background: var(--dark);
  color: #484a4a;
}
.spin {
  width: 74px;
  padding-left: 3px;
}
.spin + .axis + .spin {
  margin-right: 0;
}
.spin input {
  width: 57px;
  padding-right: 3px;
  text-align: right;
  color: #4583bd;
}
.row > .vis:first-child {
  width: 84px;
}
.check {
  display: flex;
  flex-shrink: 0;
  align-items: center;
  gap: 9px;
  width: 117px;
}
.check input {
  appearance: none;
  width: 18px;
  height: 18px;
  background: var(--dark);
  border: 1px solid #383a3a;
}
.check input:checked::before {
  content: "";
  display: block;
  width: 12px;
  height: 6px;
  margin: 3px 2px;
  border: solid #fff;
  border-width: 0 0 2px 2px;
  transform: rotate(-45deg);
}
.opacity {
  width: 74px;
  padding-left: 4px;
}
.opacity input {
  width: 42px;
  padding-left: 9px;
  color: var(--text);
}
.opacity .chev {
  color: #aaa;
}
.prop-tabs button {
  width: 114px;
  height: 19px;
}
.prop-tabs .on {
  width: 112px;
}
.color-bar {
  height: 14px;
  flex-shrink: 0;
  margin: 43px 0 5px 8px;
  background: var(--green);
}
.color-row {
  height: 24px;
  flex-shrink: 0;
  display: flex;
  align-items: center;
  padding-left: 6px;
}
.expand {
  border: 4px solid transparent;
  border-left: 4px solid #999;
  border-right: 0;
}
.swatch {
  width: 24px;
  height: 24px;
  margin: 0 25px 0 3px;
  background: var(--green);
  border: 1px solid #fff;
  outline: 1px solid #222;
  outline-offset: -2px;
}
.color-row input {
  flex: 1;
  min-width: 0;
  height: 21px;
  margin-right: 6px;
  padding-left: 4px;
  background: var(--dark);
  border: 1px solid #3a3c3c;
  color: #4583bd;
}
.fill {
  width: 24px;
  height: 24px;
  display: flex;
  align-items: center;
  justify-content: center;
  background: #3a3c3d;
  border: 1px solid #222;
}
.fill.on {
  background: #151515;
}
.fill:last-child {
  width: 21px;
}
.prop-scroll {
  height: 11px;
  margin-top: 2px;
  display: flex;
  flex-shrink: 0;
  justify-content: flex-end;
  background: var(--cell);
}
.prop-scroll span {
  width: 33px;
  background: #a2a2a0;
}
.conn-tabs {
  padding-top: 1px;
  background: #fff;
}
.conn-tabs button {
  width: 90px;
}
.conn-tabs .on {
  width: 91px;
}
.conn-tabs button:nth-child(3) {
  width: 80px;
  padding-left: 9px;
}
.conn-tabs .arrow {
  flex: 1;
  display: flex;
  align-items: center;
  justify-content: center;
  border-left: 1px solid #111;
}
.conn-tools {
  height: 24px;
  flex-shrink: 0;
  display: flex;
  align-items: center;
  gap: 11px;
  padding-left: 6px;
  background: var(--bar);
}
.conn {
  width: 100%;
  border-collapse: collapse;
  table-layout: fixed;
  background: #2b2d2d;
}
.conn th {
  height: 24px;
  padding: 0 0 0 20px;
  text-align: left;
  font-weight: normal;
}
.conn th:first-child {
  width: 94px;
}
.conn th:last-child {
  width: 20px;
  padding: 0;
}
.conn-body {
  flex: 1;
  display: flex;
  align-items: flex-end;
}
.conn-scroll {
  width: 33%;
  height: 10px;
  background: #47494a;
}

/* status bar */
.bottombar {
  height: 24px;
  flex-shrink: 0;
  display: flex;
  align-items: center;
  padding-left: 7px;
  background: var(--bar);
}
.locator {
  width: 201px;
  height: 20px;
  margin: 4px 13px 0;
  display: flex;
  align-items: center;
  gap: 4px;
  padding-left: 6px;
  background: #fff;
}
.locator input {
  flex: 1;
  min-width: 0;
  font: 14px/18px "Noto Sans", sans-serif;
}
.panes {
  display: flex;
  padding-top: 6px;
}
.panes button {
  width: 93px;
  text-align: left;
  white-space: nowrap;
}
.panes .short {
  width: 66px;
}
.panes b {
  font-weight: normal;
  margin-right: 6px;
}
.pane-more {
  margin-top: 6px;
}
.progress {
  width: 22px;
  height: 22px;
  margin: 0 18px 0 auto;
  padding: 10px 4px 0;
  background: #111;
}
.bottombar > svg:last-child {
  margin: 6px 19px 0 0;
}

.arrows {
  position: absolute;
  left: 0;
  top: 0;
  pointer-events: none;
}
.watermark {
  position: absolute;
  right: 8px;
  bottom: 6px;
  font: 18px/24px "Noto Sans CJK SC", sans-serif;
  color: rgba(255, 255, 255, 0.38);
}
```
